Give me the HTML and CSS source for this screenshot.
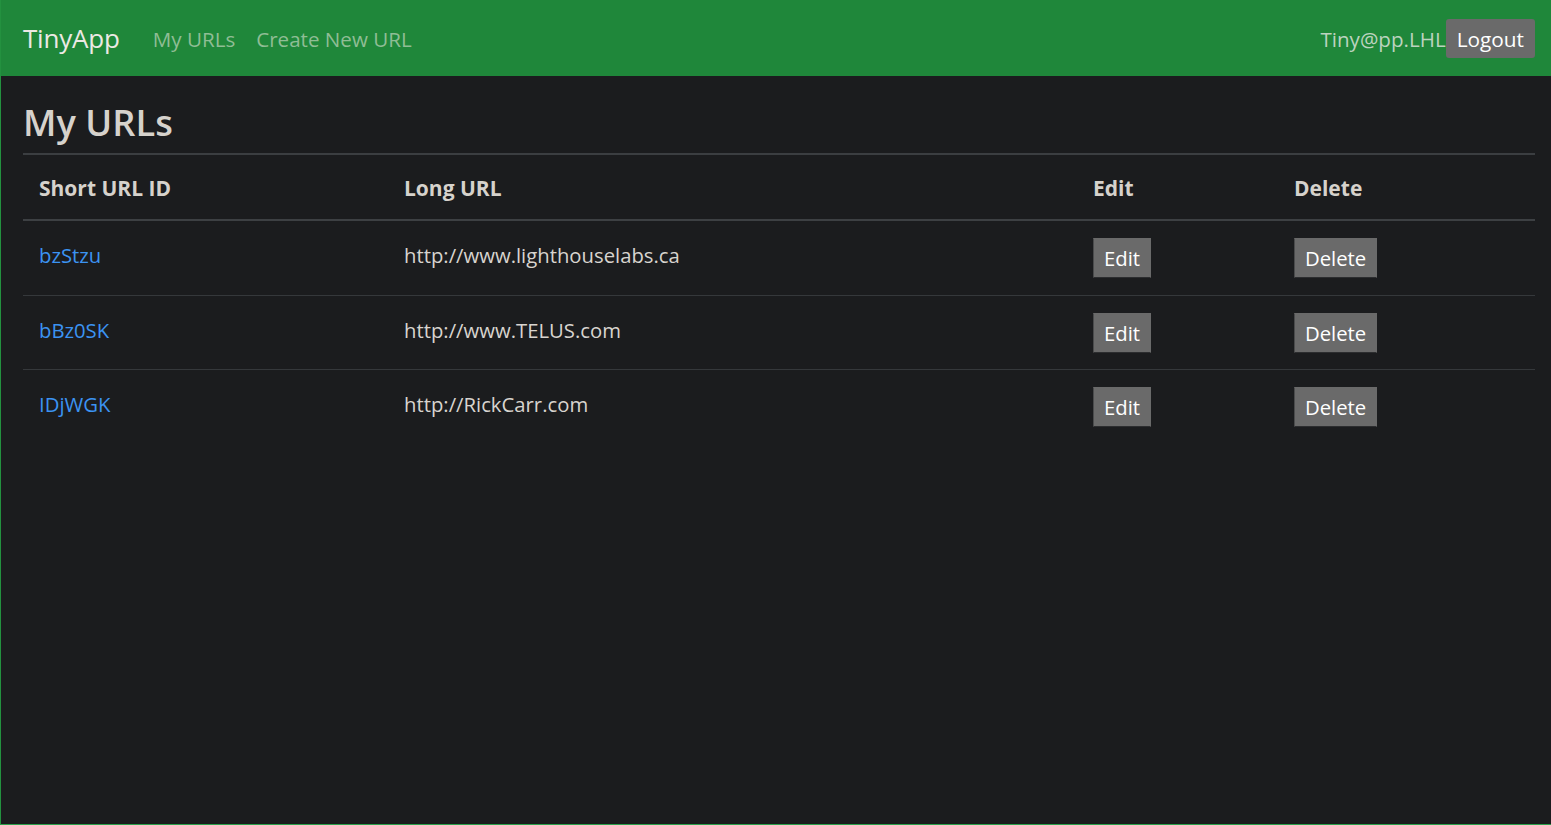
FILE: index.html
```html
<!DOCTYPE html>
<html lang="en">
<head>
<meta charset="utf-8">
<title>TinyApp</title>
<link rel="stylesheet" href="styles.css">
</head>
<body>
<div class="page">
  <nav class="navbar">
    <a class="brand" href="#">TinyApp</a>
    <div class="nav-links">
      <a class="nav-link" href="#">My URLs</a>
      <a class="nav-link" href="#">Create New URL</a>
    </div>
    <div class="nav-user">
      <span class="user">Tiny@pp.LHL</span>
      <button class="logout" type="button">Logout</button>
    </div>
  </nav>
  <main class="content">
    <h1 class="title">My URLs</h1>
    <table class="url-table">
      <thead>
        <tr>
          <th class="c-short">Short URL ID</th>
          <th class="c-long">Long URL</th>
          <th class="c-edit">Edit</th>
          <th class="c-del">Delete</th>
        </tr>
      </thead>
      <tbody>
        <tr>
          <td><a class="short" href="#">bzStzu</a></td>
          <td>http://www.lighthouselabs.ca</td>
          <td class="cell-btn"><button class="btn" type="button">Edit</button></td>
          <td class="cell-btn"><button class="btn" type="button">Delete</button></td>
        </tr>
        <tr>
          <td><a class="short" href="#">bBz0SK</a></td>
          <td>http://www.TELUS.com</td>
          <td class="cell-btn"><button class="btn" type="button">Edit</button></td>
          <td class="cell-btn"><button class="btn" type="button">Delete</button></td>
        </tr>
        <tr>
          <td><a class="short" href="#">IDjWGK</a></td>
          <td>http://RickCarr.com</td>
          <td class="cell-btn"><button class="btn" type="button">Edit</button></td>
          <td class="cell-btn"><button class="btn" type="button">Delete</button></td>
        </tr>
      </tbody>
    </table>
  </main>
</div>
</body>
</html>
```
FILE: styles.css
```css
* { box-sizing: border-box; }
html, body { margin: 0; padding: 0; }
body {
  background: #1b1c1e;
  font-family: "Open Sans", "Noto Sans", sans-serif;
  color: #d8d4cf;
  font-size: 20.3px;
}
.page {
  min-height: 100vh;
  border-left: 1px solid #23913f;
  border-bottom: 1px solid #2ba14c;
  display: flex;
  flex-direction: column;
}
.navbar {
  height: 76px;
  background: #1f873a;
  display: flex;
  align-items: center;
  padding: 0 16px 0 22px;
}
.brand {
  color: #ece9e4;
  text-decoration: none;
  font-size: 26px;
  margin-right: 33px;
  letter-spacing: -0.2px;
}
.nav-links { display: flex; gap: 21px; padding-top: 2px; }
.nav-link {
  color: #8fbd95;
  text-decoration: none;
  font-size: 20.6px;
}
.nav-user { margin-left: auto; display: flex; align-items: center; }
.user { color: #bcd3bf; font-size: 20.6px; padding-top: 1px; }
.logout {
  font-family: inherit;
  font-size: 20.8px;
  color: #ffffff;
  background: #6a6a6a;
  border: none;
  border-radius: 3px;
  height: 39px;
  padding: 0 11px;
  margin-top: 1px;
  cursor: pointer;
}
.content { padding: 0 16px 0 22px; }
.title {
  margin: 22px 0 7px;
  font-size: 36.3px;
  font-weight: 600;
  line-height: 48px;
  color: #d6d2cc;
}
.url-table {
  width: 100%;
  border-collapse: collapse;
  border-top: 2px solid #3b3e41;
}
.url-table th, .url-table td {
  text-align: left;
  vertical-align: top;
  padding: 19px 16px 16px;
  line-height: 30px;
}
.url-table th {
  font-weight: 700;
  font-size: 21px;
  color: #d6d2cc;
  padding: 18px 16px 16px;
  border-bottom: 2px solid #3d4043;
}
.url-table td.cell-btn { padding-top: 17px; }
.url-table tbody tr:first-child td.cell-btn { padding-bottom: 17px; }
.url-table tbody tr + tr td { border-top: 1px solid #35383b; }
.c-short { width: 365px; }
.c-long { width: 689px; }
.c-edit { width: 201px; }
.short { color: #3b93f2; text-decoration: none; }
.btn {
  font-family: inherit;
  font-size: 20.3px;
  color: #ffffff;
  background: #6a6a6a;
  border: 1px solid #6a6a6a;
  border-bottom-color: #2c2d2f;
  border-left-color: #4a4b4c;
  height: 40px;
  padding: 0 10px;
}
```
